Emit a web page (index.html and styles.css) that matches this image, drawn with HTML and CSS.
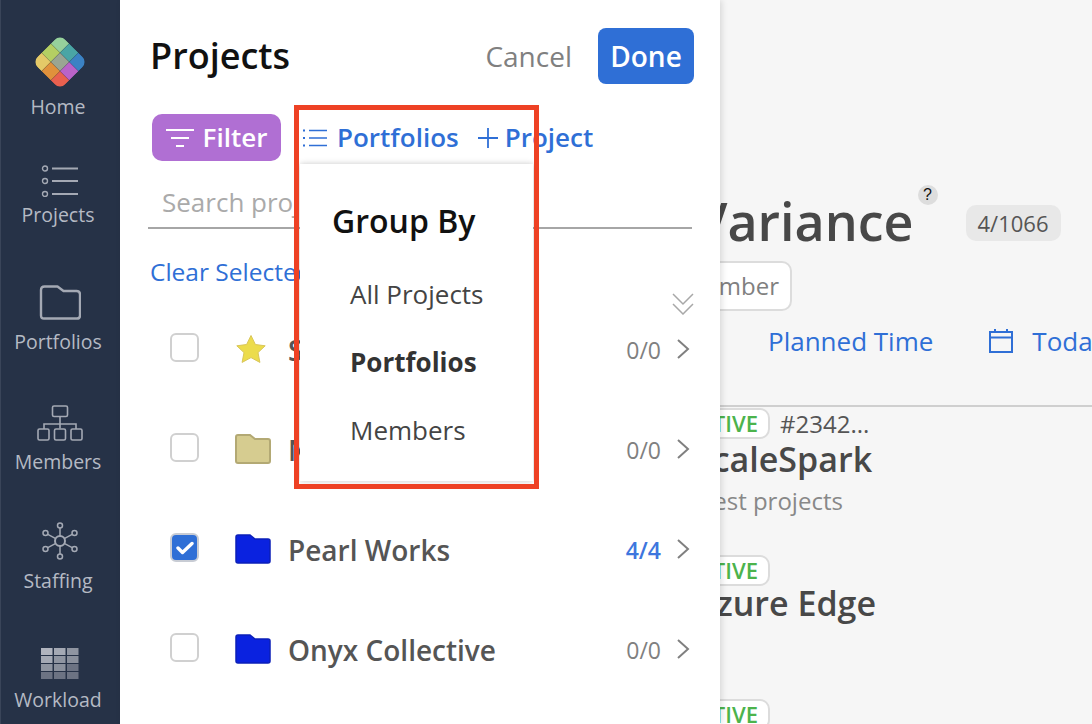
FILE: index.html
```html
<!DOCTYPE html>
<html lang="en">
<head>
<meta charset="utf-8">
<title>Projects</title>
<link rel="stylesheet" href="styles.css">
</head>
<body>
<div class="app">
  <nav class="sidebar">
    <a class="nav-item nav-home">
      <svg class="nav-icon" width="50" height="50" viewBox="2 2 46 46"><defs><clipPath id="logo-clip"><rect x="7" y="7" width="36" height="36" rx="7"/></clipPath></defs><g transform="rotate(45 25 25)" clip-path="url(#logo-clip)" stroke="#00000022" stroke-width=".5"><rect x="7" y="7" width="12" height="12" fill="#96d19c"/><rect x="19" y="7" width="12" height="12" fill="#4aa5a5"/><rect x="31" y="7" width="12" height="12" fill="#3b82c4"/><rect x="7" y="19" width="12" height="12" fill="#b4cf63"/><rect x="19" y="19" width="12" height="12" fill="#9aa593"/><rect x="31" y="19" width="12" height="12" fill="#b963c9"/><rect x="7" y="31" width="12" height="12" fill="#e4c968"/><rect x="19" y="31" width="12" height="12" fill="#e0913c"/><rect x="31" y="31" width="12" height="12" fill="#e9604f"/></g></svg>
      <span class="nav-label">Home</span>
    </a>
    <a class="nav-item nav-projects">
      <svg class="nav-icon" width="38" height="32" viewBox="0 0 38 32" fill="none" stroke="#a4a9b4"><circle cx="4" cy="3.5" r="2.5" stroke-width="1.4"/><circle cx="4" cy="16" r="2.5" stroke-width="1.4"/><circle cx="4" cy="29" r="2.5" stroke-width="1.4"/><path d="M11 3.5h26M11 16h26M11 29h26" stroke-width="2"/></svg>
      <span class="nav-label">Projects</span>
    </a>
    <a class="nav-item nav-portfolios">
      <svg class="nav-icon" width="42" height="35" viewBox="0 0 42 35" fill="none" stroke="#a4a9b4" stroke-width="2.4"><path d="M2 5q0-3.5 3.500-3.500h13l6 4.500h13q3.500 0 3.500 3.500v21q0 3-3 3H5q-3 0-3-3z" stroke-linejoin="round"/></svg>
      <span class="nav-label">Portfolios</span>
    </a>
    <a class="nav-item nav-members">
      <svg class="nav-icon" width="46" height="36" viewBox="0 0 46 36" fill="none" stroke="#a4a9b4" stroke-width="1.600"><rect x="15.500" y="1" width="15" height="10.500" rx="1.500"/><path d="M23 11.500v12M7 24v-5h32v5"/><rect x="1" y="24" width="11" height="11" rx="1.500"/><rect x="17.500" y="24" width="11" height="11" rx="1.500"/><rect x="34" y="24" width="11" height="11" rx="1.500"/></svg>
      <span class="nav-label">Members</span>
    </a>
    <a class="nav-item nav-staffing">
      <svg class="nav-icon" width="36" height="38" viewBox="0 0 36 38" fill="none" stroke="#a4a9b4" stroke-width="1.500"><circle cx="18" cy="19" r="5" stroke-width="2"/><circle cx="18" cy="3.500" r="2.500"/><circle cx="18" cy="34.500" r="2.500"/><circle cx="3.500" cy="11" r="2.500"/><circle cx="32.500" cy="11" r="2.500"/><circle cx="3.500" cy="27" r="2.500"/><circle cx="32.500" cy="27" r="2.500"/><path d="M18 6v8M18 24v8M5.800 12.300l8 4.300M30.200 12.300l-8 4.300M5.800 25.700l8-4.300M30.200 25.700l-8-4.300"/></svg>
      <span class="nav-label">Staffing</span>
    </a>
    <a class="nav-item nav-workload">
      <svg class="nav-icon" width="38" height="32" viewBox="0 0 38 32"><rect x="0" y="0" width="11.500" height="7" fill="#b0b4be"/><rect x="13" y="0" width="11.500" height="7" fill="#a4a9b4"/><rect x="26" y="0" width="11.500" height="7" fill="#8f95a1"/><rect x="0" y="8" width="11.500" height="7" fill="#a4a9b4"/><rect x="13" y="8" width="11.500" height="7" fill="#8f95a1"/><rect x="26" y="8" width="11.500" height="7" fill="#8a909c"/><rect x="0" y="16" width="11.500" height="7" fill="#8f95a1"/><rect x="13" y="16" width="11.500" height="7" fill="#8a909c"/><rect x="26" y="16" width="11.500" height="7" fill="#6c7383"/><rect x="0" y="24" width="11.500" height="7" fill="#6c7383"/><rect x="13" y="24" width="11.500" height="7" fill="#6c7383"/><rect x="26" y="24" width="11.500" height="7" fill="#6c7383"/></svg>
      <span class="nav-label">Workload</span>
    </a>
  </nav>

  <section class="panel">
    <header class="panel-head">
      <h1 class="panel-title">Projects</h1>
      <div class="panel-actions">
        <button class="btn-cancel">Cancel</button>
        <button class="btn-done">Done</button>
      </div>
    </header>
    <div class="toolbar">
      <button class="btn-filter">
        <svg width="28" height="20" viewBox="0 0 28 20" fill="none" stroke="#fff" stroke-width="2.200"><path d="M0 2h28M5 10h18M10 18h8"/></svg>
        <span class="btn-filter-text">Filter</span>
      </button>
      <a class="tool-link tool-portfolios">
        <svg width="25" height="20" viewBox="0 0 25 20" fill="none" stroke="#2f6fd6" stroke-width="1.500"><path d="M6 2.500h18M6 10h18M6 17.500h18"/><path d="M0 2.500h2M0 10h2M0 17.500h2" stroke-width="2"/></svg>
        <span class="tool-text">Portfolios</span>
      </a>
      <a class="tool-link tool-project">
        <svg width="20" height="20" viewBox="0 0 20 20" fill="none" stroke="#2f6fd6" stroke-width="1.800"><path d="M10 0v20M0 10h20"/></svg>
        <span class="tool-text">Project</span>
      </a>
    </div>
    <div class="search">Search projects</div>
    <a class="clear-link">Clear Selected</a>
    <div class="project-list">
      <svg class="collapse-all" width="22" height="22" viewBox="0 0 22 22" fill="none" stroke="#a8a8a8" stroke-width="1.500"><path d="M1 1l10 10L21 1M1 11l10 10 10-10"/></svg>
      <div class="project-row">
        <span class="check"></span>
        <svg class="row-icon" width="36" height="30" viewBox="0 0 36 30"><path d="M16 1.500l4.400 9 9.800 1.300-7.200 6.800 1.900 9.800L16 23.600l-8.900 4.800 1.900-9.800-7.200-6.800 9.800-1.300z" fill="#ecdc4c" stroke="#d9c65a" stroke-linejoin="round"/></svg>
        <span class="row-name">Starred</span>
        <span class="row-count">0/0</span>
        <svg class="row-chevron" width="14" height="20" viewBox="0 0 14 20" fill="none" stroke="#808080" stroke-width="2"><path d="M2 1l10 9-10 9"/></svg>
      </div>
      <div class="project-row">
        <span class="check"></span>
        <svg class="row-icon" width="36" height="30" viewBox="0 0 36 30"><path d="M1 3q0-2 2-2h12l5 4h13q2 0 2 2v20q0 2-2 2H3q-2 0-2-2z" fill="#d6cc90" stroke="#b3a974" stroke-width="2"/></svg>
        <span class="row-name">No Portfolio</span>
        <span class="row-count">0/0</span>
        <svg class="row-chevron" width="14" height="20" viewBox="0 0 14 20" fill="none" stroke="#808080" stroke-width="2"><path d="M2 1l10 9-10 9"/></svg>
      </div>
      <div class="project-row">
        <span class="check check-on"><svg width="18" height="14" viewBox="0 0 18 14" fill="none" stroke="#fff" stroke-width="3.400" stroke-linecap="round" stroke-linejoin="round"><path d="M2 7l4.500 4.500L16 2.500"/></svg></span>
        <svg class="row-icon" width="36" height="30" viewBox="0 0 36 30"><path d="M1 3q0-2 2-2h12l5 4h13q2 0 2 2v20q0 2-2 2H3q-2 0-2-2z" fill="#0a22e0" stroke="#0b1fb8" stroke-width="1.500"/></svg>
        <span class="row-name">Pearl Works</span>
        <span class="row-count row-count-on">4/4</span>
        <svg class="row-chevron" width="14" height="20" viewBox="0 0 14 20" fill="none" stroke="#808080" stroke-width="2"><path d="M2 1l10 9-10 9"/></svg>
      </div>
      <div class="project-row">
        <span class="check"></span>
        <svg class="row-icon" width="36" height="30" viewBox="0 0 36 30"><path d="M1 3q0-2 2-2h12l5 4h13q2 0 2 2v20q0 2-2 2H3q-2 0-2-2z" fill="#0a22e0" stroke="#0b1fb8" stroke-width="1.500"/></svg>
        <span class="row-name">Onyx Collective</span>
        <span class="row-count">0/0</span>
        <svg class="row-chevron" width="14" height="20" viewBox="0 0 14 20" fill="none" stroke="#808080" stroke-width="2"><path d="M2 1l10 9-10 9"/></svg>
      </div>
    </div>
  </section>

  <main class="main">
    <div class="main-title-row">
      <h2 class="main-title">Variance</h2>
      <span class="help-dot">?</span>
      <span class="count-pill">4/1066</span>
    </div>
    <div class="member-row"><span class="member-pill">Member</span></div>
    <div class="view-row">
      <a class="view-link">Planned Time</a>
      <a class="view-link view-today">
        <svg width="24" height="24" viewBox="0 0 24 24" fill="none" stroke="#2f6fd6" stroke-width="2"><path d="M1 3h22v20H1zM1 8.500h22M6 0v4M18 0v4"/></svg>
        Today
      </a>
    </div>
    <div class="card card-first">
      <div class="card-meta"><span class="status">ACTIVE</span><span class="card-id">#2342...</span></div>
      <div class="card-name">ScaleSpark</div>
      <div class="card-sub">Test projects</div>
    </div>
    <div class="card card-second">
      <div class="card-meta"><span class="status">ACTIVE</span></div>
      <div class="card-name">Azure Edge</div>
    </div>
    <div class="card card-third">
      <div class="card-meta"><span class="status">ACTIVE</span></div>
    </div>
  </main>

  <div class="group-menu">
    <div class="group-title">Group By</div>
    <div class="group-option">All Projects</div>
    <div class="group-option group-option-on">Portfolios</div>
    <div class="group-option">Members</div>
  </div>
  <div class="highlight"></div>
</div>
</body>
</html>
```
FILE: styles.css
```css
* { box-sizing: border-box; }
html, body { margin: 0; height: 100%; }
body { font-family: "Open Sans", "Noto Sans", sans-serif; background: #f6f6f6; overflow: hidden; }
h1, h2 { margin: 0; }
button { font-family: inherit; border: 0; background: none; padding: 0; }

.app { position: relative; display: flex; width: 1092px; height: 724px; overflow: hidden; }

/* Sidebar */
.sidebar { flex: 0 0 120px; display: flex; flex-direction: column; background: #263247; border-left: 1px solid #3a4559; }
.nav-item { display: flex; flex-direction: column; align-items: center; padding-right: 5px; }
.nav-label { font-size: 19.5px; line-height: 24px; color: #b5bac4; }
.nav-icon { display: block; margin-left: 3px; }
.nav-home { padding-top: 37px; }
.nav-home .nav-icon { margin-bottom: 8px; }
.nav-projects { padding-top: 46px; }
.nav-projects .nav-icon { margin-bottom: 6px; }
.nav-portfolios { padding-top: 58px; }
.nav-portfolios .nav-icon { margin-bottom: 10px; }
.nav-members { padding-top: 51px; }
.nav-members .nav-icon { margin-bottom: 9px; }
.nav-staffing { padding-top: 48px; }
.nav-staffing .nav-icon { margin-bottom: 9px; }
.nav-workload { padding-top: 55px; }
.nav-workload .nav-icon { margin-bottom: 8px; }

/* Panel */
.panel { position: relative; z-index: 2; flex: 0 0 600px; background: #fff; box-shadow: 2px 0 6px rgba(0,0,0,.12); padding: 28px 26px 0 28px; }
.panel-head { display: flex; justify-content: space-between; align-items: center; height: 56px; padding-left: 2px; }
.panel-title { font-size: 36px; font-weight: 600; color: #111; line-height: 56px; }
.panel-actions { display: flex; align-items: center; gap: 26px; }
.btn-cancel { font-size: 28px; color: #808080; }
.btn-done { width: 96px; height: 56px; border-radius: 8px; background: #2f6fd6; color: #fff; font-size: 28px; font-weight: 600; }

.toolbar { display: flex; align-items: center; margin-top: 30px; height: 47px; padding-left: 4px; }
.btn-filter { display: flex; align-items: center; justify-content: center; gap: 9px; width: 129px; height: 47px; border-radius: 10px; background: #b06fd3; color: #fff; font-size: 26px; font-weight: 600; }
.btn-filter-text, .tool-text { margin-bottom: 2px; }
.tool-link { display: flex; align-items: center; font-size: 26px; font-weight: 600; color: #2f6fd6; }
.tool-portfolios { gap: 9px; margin-left: 22px; }
.tool-project { gap: 7px; margin-left: 19px; }

.search { height: 47px; margin-top: 21px; margin-right: 2px; padding: 2px 0 0 14px; border-bottom: 2px solid #a6a6a6; font-size: 26px; line-height: 36px; color: #aaa; }
.clear-link { display: block; margin-top: 28px; padding-left: 2px; font-size: 24.5px; line-height: 30px; color: #2f6fd6; }

.project-list { position: relative; margin-top: 12px; }
.collapse-all { position: absolute; top: -6px; right: 0; }
.project-row { display: flex; align-items: center; height: 100px; padding-left: 22px; }
.check { display: flex; align-items: center; justify-content: center; flex: 0 0 29px; height: 29px; margin-bottom: 3px; border: 2px solid #d0d0d0; border-radius: 6px; background: #fff; }
.check-on { background: #2f6fd6; border-color: #c8ccd4; }
.row-icon { margin-left: 36px; flex: none; }
.row-name { margin-left: 17px; margin-top: 2px; flex: 1; font-size: 28px; font-weight: 600; color: #555; white-space: nowrap; }
.row-count { margin-top: 2px; font-size: 23px; color: #808080; }
.row-count-on { color: #3d76de; font-weight: 600; }
.row-chevron { margin-left: 15px; margin-right: 4px; flex: none; }

/* Main */
.main { flex: 1; min-width: 0; background: #f6f6f6; }
.main-title-row { display: flex; align-items: flex-start; height: 247px; margin-left: -25px; padding-top: 181px; }
.main-title { font-size: 52px; line-height: 80px; font-weight: 600; color: #484848; white-space: nowrap; }
.help-dot { flex: none; width: 20px; height: 20px; margin: 4px 0 0 4px; border-radius: 50%; background: #ddd; color: #111; font-family: "Liberation Sans", sans-serif; font-size: 16px; font-weight: 400; line-height: 20px; text-align: center; }
.count-pill { flex: none; margin: 24px 0 0 28px; width: 95px; height: 36px; border-radius: 10px; background: #e8e8e8; color: #555; font-size: 22px; line-height: 36px; text-align: center; }
.member-row { display: flex; justify-content: flex-start; margin-left: -40px; margin-top: 14px; }
.member-pill { display: block; width: 112px; height: 50px; border: 2px solid #dcdcdc; border-radius: 10px; background: #fff; color: #808080; font-size: 24px; line-height: 46px; text-align: right; padding-right: 11px; }
.view-row { display: flex; align-items: center; height: 96px; padding-left: 48px; padding-bottom: 34px; white-space: nowrap; border-bottom: 2px solid #cfcfcf; }
.view-link { display: flex; align-items: center; gap: 19px; font-size: 26px; color: #2f6fd6; }
.view-today { margin-left: 56px; }

.card { margin-left: -40px; }
.card-meta { display: flex; align-items: center; gap: 10px; }
.status { flex: none; width: 90px; height: 31px; border: 2px solid #dcdcdc; border-radius: 10px; background: #fff; color: #4cb34c; font-size: 22px; font-weight: 600; line-height: 27px; text-align: right; padding-right: 10px; }
.card-id { font-size: 24px; line-height: 31px; color: #555; }
.card-name { margin-left: 14px; font-size: 34px; font-weight: 600; line-height: 40px; color: #484848; white-space: nowrap; }
.card-sub { margin-left: 20px; font-size: 24px; color: #888; line-height: 34px; margin-top: 5px; white-space: nowrap; }
.card-first { margin-top: 1px; }
.card-second { margin-top: 37px; }
.card-second .card-name { margin-top: -3px; }
.card-third { margin-top: 76px; }

/* Group by menu */
.group-menu { position: absolute; z-index: 3; left: 300px; top: 164px; width: 233px; height: 317px; background: #fff; box-shadow: 0 0 6px rgba(0,0,0,.22); padding: 35px 0 0 32px; }
.group-title { font-size: 32px; font-weight: 600; line-height: 44px; color: #111; margin-bottom: 37px; }
.group-option { margin-left: 18px; height: 68px; font-size: 26px; line-height: 28px; color: #444; }
.group-option-on { font-weight: 700; color: #333; }
.highlight { position: absolute; z-index: 4; left: 294px; top: 105px; width: 245px; height: 384px; border: 5px solid #ee4124; pointer-events: none; }
```
